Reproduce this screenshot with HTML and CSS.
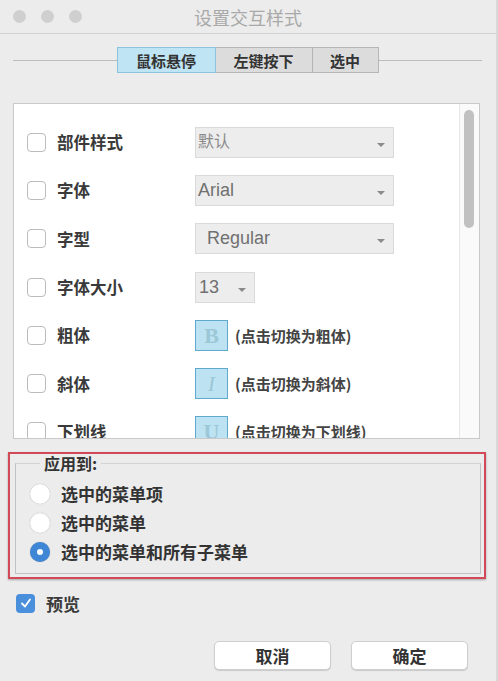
FILE: index.html
```html
<!DOCTYPE html>
<html lang="zh-CN">
<head>
  <meta charset="UTF-8">
  <meta name="viewport" content="width=device-width, initial-scale=1.0">
  <title>设置交互样式</title>
  <link rel="stylesheet" href="styles.css">
</head>
<body>
  <div class="window">
    <div class="titlebar">
      <div class="lights">
        <span class="light"></span>
        <span class="light"></span>
        <span class="light"></span>
      </div>
      <div class="title">设置交互样式</div>
      <div></div>
    </div>

    <div class="tabbar">
      <span class="tabline"></span>
      <div class="tabs">
        <button class="tab active">鼠标悬停</button>
        <button class="tab">左键按下</button>
        <button class="tab">选中</button>
      </div>
      <span class="tabline"></span>
    </div>

    <div class="panel">
      <div class="rows">
        <div class="row">
          <span class="check"></span>
          <span class="label">部件样式</span>
          <div class="select muted">默认<span class="arrow"></span></div>
        </div>
        <div class="row">
          <span class="check"></span>
          <span class="label">字体</span>
          <div class="select">Arial<span class="arrow"></span></div>
        </div>
        <div class="row">
          <span class="check"></span>
          <span class="label">字型</span>
          <div class="select indent">Regular<span class="arrow"></span></div>
        </div>
        <div class="row">
          <span class="check"></span>
          <span class="label">字体大小</span>
          <div class="select small">13<span class="arrow"></span></div>
        </div>
        <div class="row">
          <span class="check"></span>
          <span class="label">粗体</span>
          <span class="toggle bold">B</span>
          <span class="hint">(点击切换为粗体)</span>
        </div>
        <div class="row">
          <span class="check"></span>
          <span class="label">斜体</span>
          <span class="toggle italic">I</span>
          <span class="hint">(点击切换为斜体)</span>
        </div>
        <div class="row">
          <span class="check"></span>
          <span class="label">下划线</span>
          <span class="toggle">U</span>
          <span class="hint">(点击切换为下划线)</span>
        </div>
      </div>
      <div class="scroll">
        <div class="thumb"></div>
      </div>
    </div>

    <div class="highlight">
      <fieldset class="apply">
        <legend>应用到:</legend>
        <label class="radio-row"><span class="radio"></span>选中的菜单项</label>
        <label class="radio-row"><span class="radio"></span>选中的菜单</label>
        <label class="radio-row"><span class="radio on"></span>选中的菜单和所有子菜单</label>
      </fieldset>
    </div>

    <div class="preview">
      <span class="check on">
        <svg width="12" height="12" viewBox="0 0 12 12"><path d="M2 6.5 L5 9.5 L10 2.5" fill="none" stroke="#fff" stroke-width="1.8" stroke-linecap="round" stroke-linejoin="round"/></svg>
      </span>
      <span class="label">预览</span>
    </div>

    <div class="actions">
      <button class="btn">取消</button>
      <button class="btn">确定</button>
    </div>
  </div>
</body>
</html>
```

FILE: styles.css
```css
body {
  margin: 0;
  padding: 0;
  background-color: #ececec;
  font-family: "Noto Sans CJK SC", "Liberation Sans", sans-serif;
  color: #333;
}

.window {
  width: 498px;
  height: 681px;
  box-sizing: border-box;
  border-right: 2px solid #d8d8d8;
}

.titlebar {
  height: 33px;
  display: grid;
  grid-template-columns: 1fr auto 1fr;
  align-items: center;
  border-bottom: 1px solid #d2d2d2;
}

.lights {
  display: flex;
  gap: 15px;
  padding-left: 13px;
}

.light {
  width: 13px;
  height: 13px;
  border-radius: 50%;
  background-color: #cfcfcf;
}

.title {
  font-size: 18px;
  color: #a9a9a9;
}

.tabbar {
  display: flex;
  align-items: center;
  margin: 13px 14px 0 13px;
}

.tabline {
  flex: 1;
  height: 1px;
  background-color: #bdbdbd;
}

.tabs {
  display: flex;
}

.tab {
  height: 26px;
  padding: 0;
  border: 1px solid #b5b5b5;
  border-left: none;
  background-color: #dcdcdc;
  font-family: "Noto Sans CJK SC", sans-serif;
  font-size: 15px;
  font-weight: bold;
  color: #333;
  width: 97px;
}

.tab:first-child {
  border-left: 1px solid #8cc3dc;
  border-color: #8cc3dc;
  width: 99px;
}

.tab:last-child {
  width: 66px;
}

.tab.active {
  background-color: #bfe4f4;
}

.panel {
  display: flex;
  height: 334px;
  margin: 30px 16px 0 13px;
  background-color: #fff;
  border: 1px solid #c9c9c9;
  overflow: hidden;
}

.rows {
  flex: 1;
  padding: 14px 0 0 13px;
}

.row {
  display: flex;
  align-items: center;
  height: 48.3px;
}

.check {
  width: 17px;
  height: 17px;
  border: 1px solid #bcbcbc;
  border-radius: 4px;
  background-color: #fff;
  box-sizing: content-box;
  flex-shrink: 0;
}

.label {
  width: 138px;
  margin-left: 11px;
  font-size: 16.5px;
  font-weight: bold;
  color: #3a3a3a;
}

.select {
  position: relative;
  width: 195px;
  height: 29px;
  padding-left: 2px;
  line-height: 29px;
  background-color: #ededed;
  border: 1px solid #dadada;
  font-family: "Liberation Sans", "Noto Sans CJK SC", sans-serif;
  font-size: 18px;
  color: #707070;
}

.select.muted {
  font-family: "Noto Sans CJK SC", sans-serif;
  font-size: 16px;
  line-height: 25px;
  color: #8a8a8a;
}

.select.indent {
  padding-left: 11px;
  width: 186px;
}

.select.small {
  width: 55px;
  padding-left: 3px;
}

.arrow {
  position: absolute;
  right: 8px;
  top: 15px;
  border-left: 4px solid transparent;
  border-right: 4px solid transparent;
  border-top: 4px solid #8a8a8a;
}

.toggle {
  width: 31px;
  height: 29px;
  border: 1px solid #5ea9cd;
  background-color: #bde3f2;
  text-align: center;
  line-height: 29px;
  font-family: "Liberation Serif", serif;
  font-size: 22px;
  font-weight: bold;
  color: #9cc7d7;
}

.toggle.italic {
  font-style: italic;
  font-weight: normal;
}

.hint {
  margin-left: 7px;
  font-size: 15px;
  font-weight: bold;
  color: #444;
}

.scroll {
  width: 19px;
  border-left: 1px solid #e6e6e6;
  background-color: #fafafa;
  padding-top: 6px;
}

.thumb {
  width: 10px;
  height: 118px;
  margin-left: 4px;
  border-radius: 5px;
  background-color: #c1c1c1;
}

.highlight {
  margin: 13px 10px 0 8px;
  border: 2px solid #d24a57;
  padding: 0 3px 3px 5px;
  box-shadow: 0 1px 2px rgba(0, 0, 0, 0.3);
}

.apply {
  margin: 0;
  padding: 7px 0 7px 14px;
  border: 1px solid #c2c2c2;
  border-top-color: #d2d2d2;
}

.apply legend {
  padding: 0 4px;
  margin-left: 10px;
  font-size: 16px;
  font-weight: bold;
  color: #333;
  line-height: 18px;
}

.radio-row {
  display: flex;
  align-items: center;
  height: 29px;
  font-size: 17px;
  font-weight: bold;
  color: #333;
}

.radio {
  width: 20px;
  height: 20px;
  border-radius: 50%;
  background-color: #fff;
  box-shadow: 0 0 1px rgba(0, 0, 0, 0.35);
  margin-right: 11px;
  box-sizing: border-box;
}

.radio.on {
  background-color: #fff;
  border: 7px solid #3f86d6;
}

.preview {
  display: flex;
  align-items: center;
  height: 20px;
  margin: 14px 0 0 16px;
}

.check.on {
  width: 19px;
  height: 19px;
  border: none;
  border-radius: 4px;
  background-color: #4a8fdb;
  display: flex;
  align-items: center;
  justify-content: center;
}

.preview .label {
  margin-left: 11px;
  font-size: 17px;
}

.actions {
  display: flex;
  justify-content: flex-end;
  gap: 20px;
  margin: 28px 28px 0 0;
}

.btn {
  width: 117px;
  height: 29px;
  padding: 0;
  background-color: #fff;
  border: 1px solid #cfcfcf;
  border-radius: 5px;
  box-shadow: 0 1px 1px rgba(0, 0, 0, 0.15);
  font-family: "Noto Sans CJK SC", sans-serif;
  font-size: 17px;
  font-weight: bold;
  color: #333;
}
```
